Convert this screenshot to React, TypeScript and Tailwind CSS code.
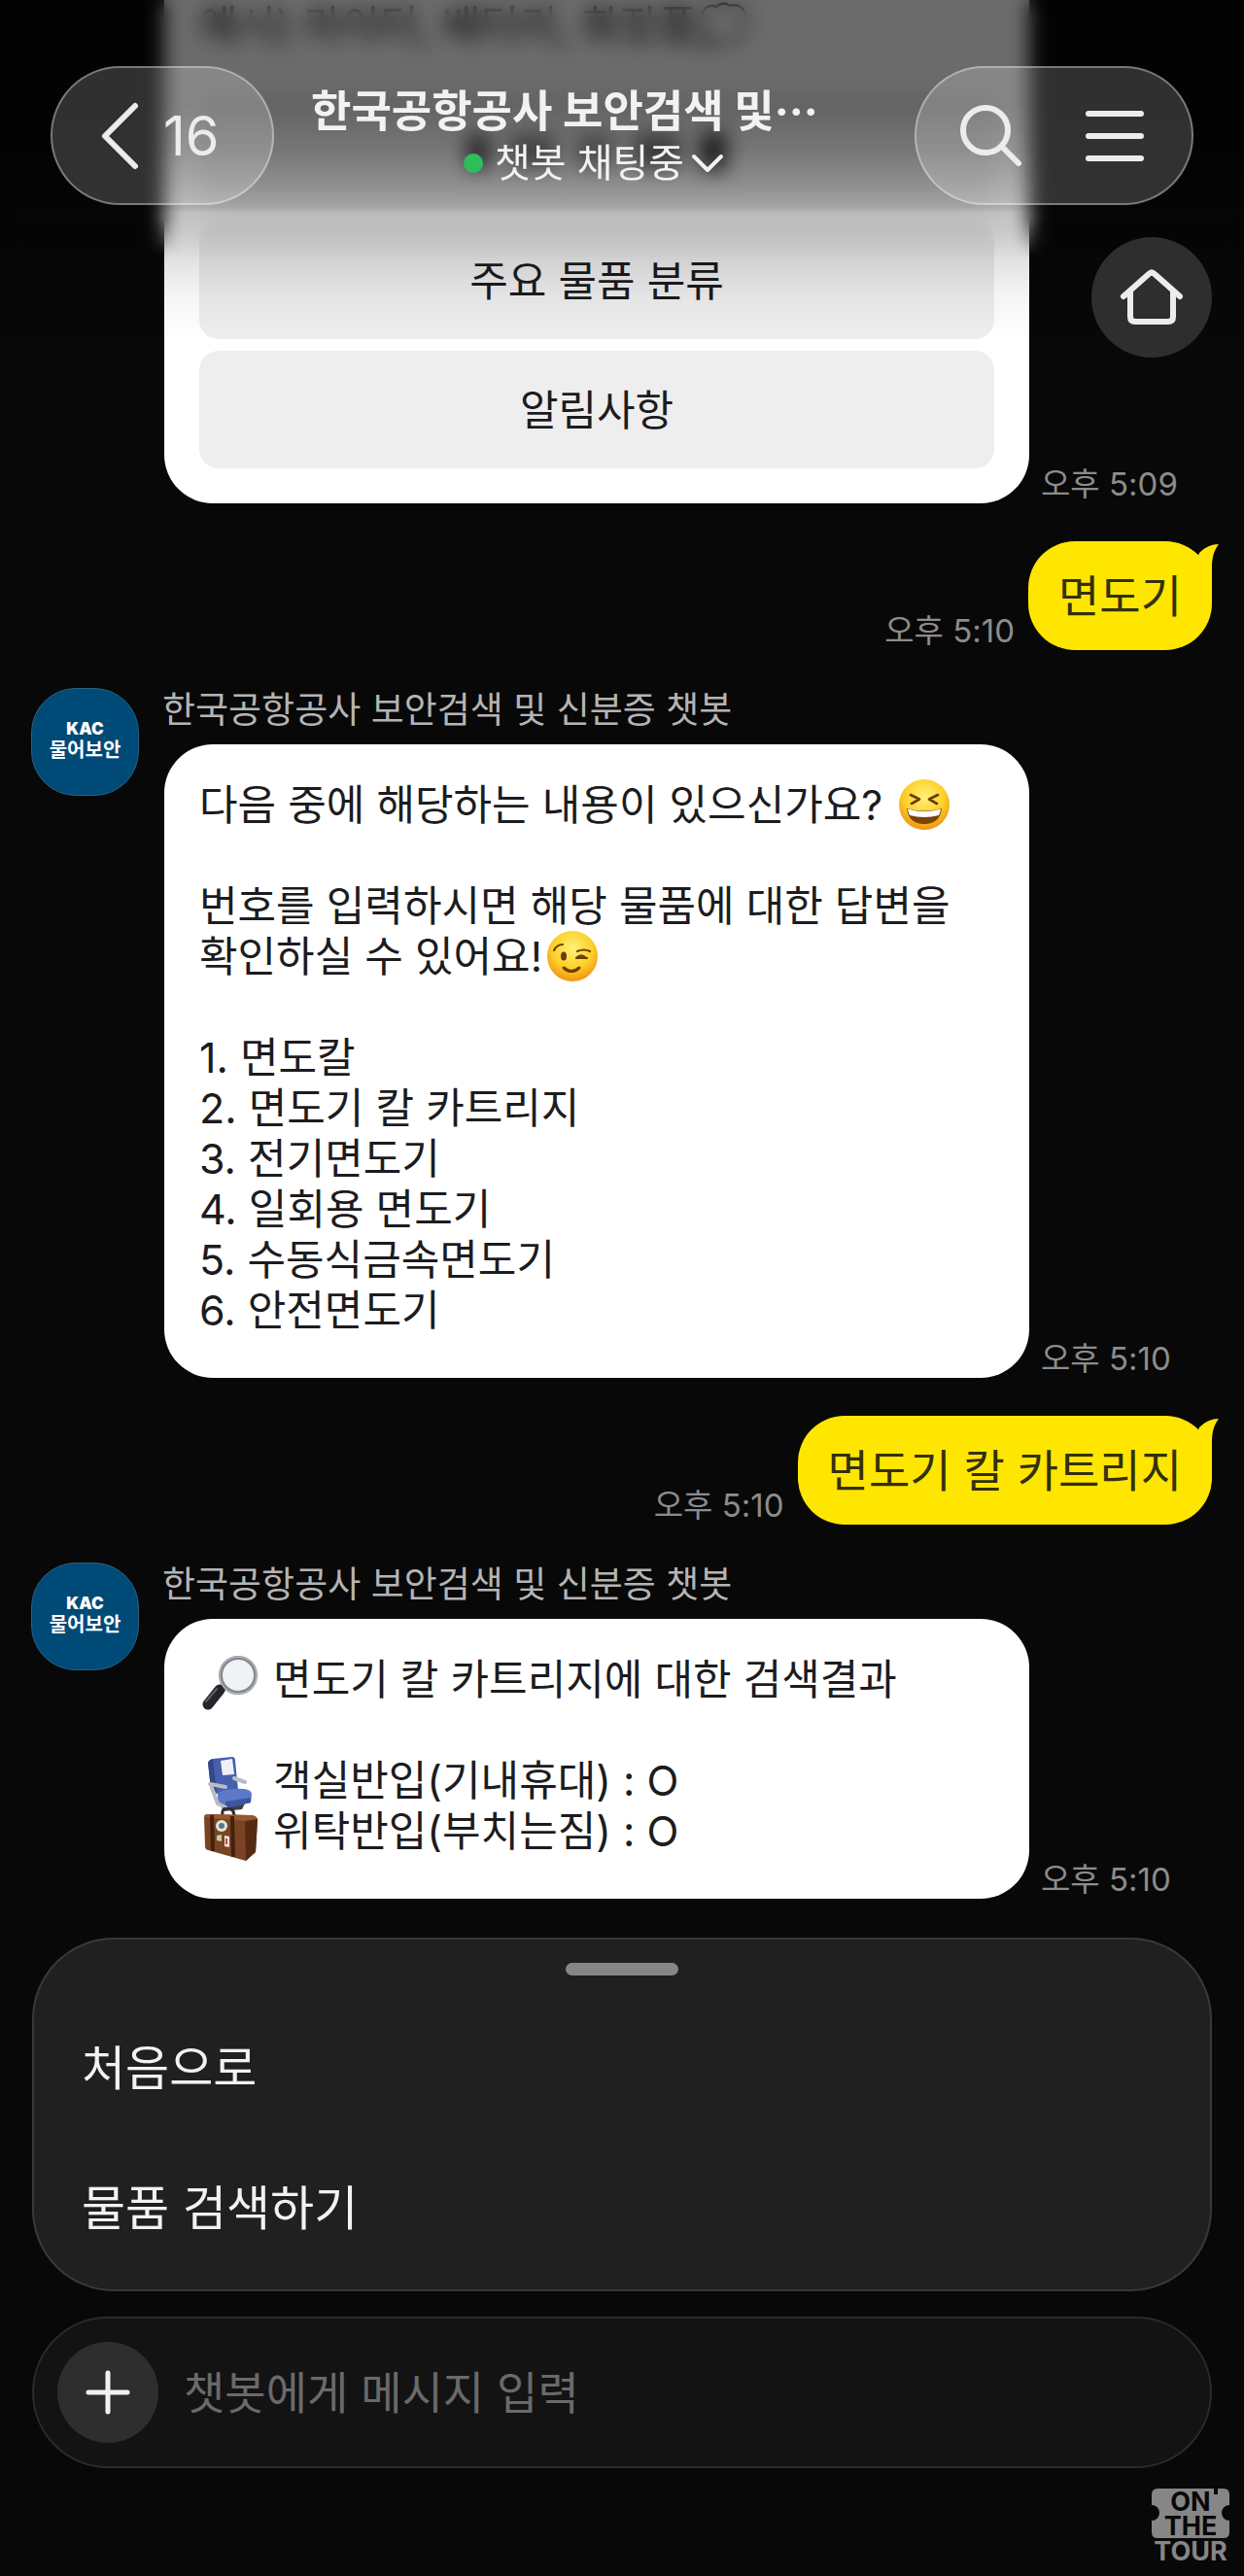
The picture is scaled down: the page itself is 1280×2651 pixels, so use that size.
import React from 'react';

interface BotMessageProps {
  time: string;
  children: React.ReactNode;
}

interface UserMessageProps {
  text: string;
  time: string;
}

const BOT_NAME = '한국공항공사 보안검색 및 신분증 챗봇';
const ITEMS = ['면도칼', '면도기 칼 카트리지', '전기면도기', '일회용 면도기', '수동식금속면도기', '안전면도기'];
const CATEGORY_BUTTONS = ['주요 물품 분류', '알림사항'];
const QUICK_MENU = ['처음으로', '물품 검색하기'];

const LaughEmoji = () => (
  <svg viewBox="0 0 54 54" className="-mt-3 -mb-1 ml-1 inline-block h-[54px] w-[54px] align-middle" role="img" aria-label="웃는 얼굴">
    <defs>
      <radialGradient id="laugh" cx="50%" cy="35%" r="65%">
        <stop offset="0" stopColor="#fff27a" />
        <stop offset="0.6" stopColor="#fdd029" />
        <stop offset="1" stopColor="#ef9511" />
      </radialGradient>
    </defs>
    <circle cx="27" cy="27" r="26" fill="url(#laugh)" />
    <path d="M13 17 L22 21.500 L14 26 M41 17 L32 21.500 L40 26" fill="none" stroke="#6b3d06" strokeWidth="2.600" strokeLinecap="round" strokeLinejoin="round" />
    <path d="M9 31 Q27 36 45 31 Q43 47 27 47 Q11 47 9 31Z" fill="#7c4305" />
    <path d="M10 31.500 Q27 36.500 44 31.500 Q43.500 36 42 38 Q27 42 12 38 Q10.500 36 10 31.500Z" fill="#fff" />
  </svg>
);

const WinkEmoji = () => (
  <svg viewBox="0 0 54 54" className="-mt-3 -mb-1 ml-1 inline-block h-[54px] w-[54px] align-middle" role="img" aria-label="윙크">
    <defs>
      <radialGradient id="wink" cx="50%" cy="35%" r="65%">
        <stop offset="0" stopColor="#fff27a" />
        <stop offset="0.6" stopColor="#fdd029" />
        <stop offset="1" stopColor="#ef9511" />
      </radialGradient>
    </defs>
    <circle cx="27" cy="27" r="26" fill="url(#wink)" />
    <ellipse cx="18" cy="27" rx="3" ry="4.500" fill="#6b3d06" />
    <path d="M8 21 Q11 15 17 15 M32 22 Q39 19 45 22 M31 29 Q36 24 41 29 M32 29 L42 29" fill="none" stroke="#6b3d06" strokeWidth="2.200" strokeLinecap="round" />
    <path d="M18 39 Q26 46 34 39" fill="none" stroke="#6b3d06" strokeWidth="3" strokeLinecap="round" />
  </svg>
);

const MagnifierEmoji = () => (
  <svg viewBox="0 0 62 56" className="-my-2 mr-0.5 inline-block h-[56px] w-[62px] align-middle" role="img" aria-label="돋보기">
    <path d="M26 32 L22 37" stroke="#8b8f95" strokeWidth="6" />
    <path d="M21 35 L9 50" stroke="#24262a" strokeWidth="11" strokeLinecap="round" />
    <path d="M18 34 L7 47" stroke="#5b5f66" strokeWidth="2" strokeLinecap="round" />
    <circle cx="40" cy="20" r="18" fill="#f0f2f5" stroke="#85898f" strokeWidth="4" />
    <circle cx="40" cy="20" r="19" fill="none" stroke="#c9cdd2" strokeWidth="1" />
  </svg>
);

const SeatEmoji = () => (
  <svg viewBox="0 0 62 56" className="-my-2 mr-0.5 inline-block h-[56px] w-[62px] align-middle" role="img" aria-label="좌석">
    <path d="M18 46 L26 56 L44 54 L50 42 Z" fill="#3c4046" />
    <path d="M9 6 Q10 3 14 2 L34 0 Q37 0 37 4 L40 34 L18 38 Q13 38 12 33 Z" fill="#4660ae" />
    <path d="M9 6 Q10 3 14 2 L18 36 Q13 36 12 33 Z" fill="#33478c" />
    <path d="M22 4 L34 2 L36 18 L24 19 Z" fill="#edf0f6" />
    <path d="M19 37 Q30 32 46 33 Q54 34 54 39 L53 47 L27 53 Q20 51 19 44 Z" fill="#5c79c9" />
    <path d="M27 53 L53 47 L53 42 L27 46 Z" fill="#3e559f" />
    <path d="M11 28 L27 31 M13 32 L19 48 L27 52 M36 22 L47 26" fill="none" stroke="#b9bcc2" strokeWidth="4" strokeLinecap="round" />
  </svg>
);

const SuitcaseEmoji = () => (
  <svg viewBox="0 0 62 56" className="-my-2 mr-0.5 inline-block h-[56px] w-[62px] align-middle" role="img" aria-label="여행가방">
    <path d="M24 8 Q23 1 28 1 Q35 0 36 8" fill="none" stroke="#2f2f31" strokeWidth="3" />
    <path d="M5 10 Q5 7 9 7 L54 8 Q60 9 60 13 L58 46 L48 55 L9 44 Q6 43 6 40 Z" fill="#7a4424" />
    <path d="M47 12 L60 12 L58 46 L48 55 Z" fill="#552a13" />
    <path d="M5 10 Q5 7 9 7 L54 8 Q59 9 60 12 L47 14 Z" fill="#96592f" />
    <path d="M13 8 L14 45 M34 9 L35 51" stroke="#43200f" strokeWidth="4" />
    <circle cx="23" cy="19" r="6" fill="#dfe5dc" />
    <circle cx="23" cy="19" r="3" fill="#55788a" />
    <path d="M18 29 L23 28 L23 35 L18 34 Z" fill="#b9d2a2" />
    <path d="M26 29 L31 30 L31 41 L26 40 Z" fill="#f0e3da" />
    <path d="M28 32 L28 38" stroke="#b2513c" strokeWidth="2" />
  </svg>
);

const Avatar = () => (
  <div className="flex h-[111px] w-[111px] shrink-0 flex-col items-center justify-center rounded-[46px] border border-[#2b5f80] bg-[#004a77] pb-1 text-white">
    <span className="text-[17px] leading-[20px] font-black">KAC</span>
    <span className="text-[20px] leading-[24px] font-bold">물어보안</span>
  </div>
);

const Time = ({ value }: { value: string }) => (
  <time className="shrink-0 text-[33px] leading-[40px] whitespace-nowrap text-[#8c8c8c]">{value}</time>
);

const BotMessage: React.FC<BotMessageProps> = ({ time, children }) => (
  <article className="flex pl-8">
    <Avatar />
    <div className="ml-6 min-w-0 flex-1">
      <h2 className="text-[37px] leading-[46px] whitespace-nowrap text-[#b4b4b4]">{BOT_NAME}</h2>
      <div className="mt-3 ml-0.5 flex items-end">
        <div className="min-w-0 flex-1 rounded-[50px] bg-white px-9 pt-9 pb-11 text-[43px] leading-[52px] break-keep text-[#1c1c1e]">
          {children}
        </div>
        <div className="flex w-[221px] shrink-0 pl-3">
          <Time value={time} />
        </div>
      </div>
    </div>
  </article>
);

const UserMessage: React.FC<UserMessageProps> = ({ text, time }) => (
  <article className="flex items-end justify-end gap-3.5 pr-[33px]">
    <Time value={time} />
    <div className="relative rounded-[48px] bg-[#ffe600] px-[31px] py-7 text-[46px] leading-[56px] text-[#33300a]">
      {text}
      {/* tail of the bubble */}
      <svg viewBox="0 0 40 50" className="absolute top-0 -right-[7px] h-[50px] w-[40px]" aria-hidden="true">
        <path d="M20 12 C26 6 33 3 40 3 C35 10 33 16 33 28 L33 50 L10 40 Z" fill="#ffe600" />
      </svg>
    </div>
  </article>
);

const Header = () => (
  <header className="absolute inset-x-0 top-0 z-10">
    {/* strong blur behind the bar, then a softer one that fades out below it */}
    <div className="absolute inset-x-0 top-0 h-[265px] backdrop-blur-[10px] [mask-image:linear-gradient(to_bottom,black_225px,transparent_265px)]" />
    <div className="absolute inset-x-0 top-0 h-[350px] bg-[linear-gradient(to_bottom,rgba(0,0,0,0.58)_0px,rgba(0,0,0,0.58)_110px,rgba(0,0,0,0.5)_155px,rgba(0,0,0,0.4)_190px,rgba(0,0,0,0.32)_213px,rgba(0,0,0,0.24)_219px,rgba(0,0,0,0.2)_240px,rgba(0,0,0,0.11)_270px,rgba(0,0,0,0.04)_305px,rgba(0,0,0,0)_350px)]" />
    <div className="relative flex px-[52px] pt-[68px]">
      <button className="flex h-[143px] w-[230px] shrink-0 items-center rounded-[72px] border-2 border-white/35 bg-white/18 pl-[48px] text-[#ececec]" aria-label="뒤로 16">
        <svg viewBox="0 0 42 72" className="h-[72px] w-[42px]" aria-hidden="true">
          <path d="M37 5 L6 36 L37 67" fill="none" stroke="currentColor" strokeWidth="6" strokeLinecap="round" strokeLinejoin="round" />
        </svg>
        <span className="ml-6 text-[56px] leading-[64px]">16</span>
      </button>
      <div className="min-w-0 flex-1 px-[38px] pt-5 text-[#f2f2f2]">
        <h1 className="truncate text-[45px] leading-[54px] font-bold">한국공항공사 보안검색 및···</h1>
        <button className="mx-auto flex items-center text-[40px] leading-[52px]">
          <span className="mr-3 h-5 w-5 rounded-full bg-[#2fbd5b]" />
          챗봇 채팅중
          <svg viewBox="0 0 36 22" className="ml-1.5 h-[22px] w-[36px]" aria-hidden="true">
            <path d="M4 4 L18 18 L32 4" fill="none" stroke="currentColor" strokeWidth="4" strokeLinecap="round" strokeLinejoin="round" />
          </svg>
        </button>
      </div>
      <div className="flex h-[143px] w-[287px] shrink-0 items-center justify-between rounded-[72px] border-2 border-white/35 bg-white/18 px-[43px] text-[#ececec]">
        <button aria-label="검색">
          <svg viewBox="0 0 68 68" className="h-[68px] w-[68px]" aria-hidden="true">
            <circle cx="28" cy="28" r="23" fill="none" stroke="currentColor" strokeWidth="6" />
            <path d="M45 45 L62 62" stroke="currentColor" strokeWidth="6" strokeLinecap="round" />
          </svg>
        </button>
        <button aria-label="메뉴">
          <svg viewBox="0 0 68 60" className="h-[60px] w-[68px]" aria-hidden="true">
            <path d="M5 7 H59 M5 30 H59 M5 53 H59" stroke="currentColor" strokeWidth="6" strokeLinecap="round" />
          </svg>
        </button>
      </div>
    </div>
    <button className="relative mt-[33px] mr-[33px] ml-auto flex h-[124px] w-[124px] items-center justify-center rounded-full bg-[#2e2e2e] text-[#ececec]" aria-label="홈">
      <svg viewBox="0 0 66 58" className="h-[58px] w-[66px]" aria-hidden="true">
        <path d="M4 28 L30 5 Q33 2 36 5 L62 28" fill="none" stroke="currentColor" strokeWidth="6" strokeLinecap="round" strokeLinejoin="round" />
        <path d="M11 23 V49 Q11 54 16 54 H50 Q55 54 55 49 V23" fill="none" stroke="currentColor" strokeWidth="6" strokeLinecap="round" />
      </svg>
    </button>
  </header>
);

const Watermark = () => (
  <svg viewBox="0 0 80 76" className="absolute right-[15px] bottom-[14px] h-[76px] w-[80px] overflow-visible" role="img" aria-label="ON' THE TOUR">
    <path d="M6 0 H64 V6 H68 V0 H74 Q80 0 80 6 V17 A8 8 0 0 0 80 33 V45 Q80 51 74 51 H6 Q0 51 0 45 V33 A8 8 0 0 0 0 17 V6 Q0 0 6 0Z" fill="#868686" />
    <g fontFamily="Inter, sans-serif" fontWeight="700" fontSize="27" textAnchor="middle">
      <text x="40" y="23" fill="#080808">ON</text>
      <text x="40" y="48" fill="#080808">THE</text>
      <text x="40" y="74" fill="#868686">TOUR</text>
    </g>
  </svg>
);

export default function App() {
  return (
    <div className="relative flex min-h-screen flex-col overflow-hidden bg-[#080808] font-[Inter,'Noto_Sans_CJK_KR',sans-serif]">
      <Header />

      <main className="flex flex-1 flex-col gap-[39px]">
        <article className="flex items-end pl-[169px]">
          <div className="min-w-0 flex-1 rounded-b-[50px] bg-white px-9 pb-9 text-[43px] leading-[52px] text-[#1c1c1e]">
            <p>예시) 라이터, 배터리, 화장품💭</p>
            {/* this one sits fully under the header blur */}
            <div className="mt-[43px] flex h-[121px] items-center justify-center gap-5 rounded-[20px] bg-[#eeeeee]" aria-hidden="true">
              <span className="h-9 w-6 bg-[#555555]" />
              <span className="h-9 w-12 bg-[#8a8a8a]" />
              <span className="h-9 w-10 bg-[#999999]" />
              <span className="h-9 w-12 bg-[#777777]" />
              <span className="h-10 w-7 bg-[#444444]" />
            </div>
            <div className="mt-3 flex flex-col gap-3">
              {CATEGORY_BUTTONS.map((label) => (
                <button key={label} className="h-[121px] rounded-[20px] bg-[#eeeeee]">
                  {label}
                </button>
              ))}
            </div>
          </div>
          <div className="flex w-[221px] shrink-0 pl-3">
            <Time value="오후 5:09" />
          </div>
        </article>

        <UserMessage text="면도기" time="오후 5:10" />

        <BotMessage time="오후 5:10">
          <p>
            다음 중에 해당하는 내용이 있으신가요? <LaughEmoji />
          </p>
          <p className="mt-[52px]">
            번호를 입력하시면 해당 물품에 대한 답변을 확인하실 수 있어요!
            <WinkEmoji />
          </p>
          <ol className="mt-[52px]">
            {ITEMS.map((item, i) => (
              <li key={item}>
                {i + 1}. {item}
              </li>
            ))}
          </ol>
        </BotMessage>

        <UserMessage text="면도기 칼 카트리지" time="오후 5:10" />

        <BotMessage time="오후 5:10">
          <p>
            <MagnifierEmoji /> 면도기 칼 카트리지에 대한 검색결과
          </p>
          <p className="mt-[52px]">
            <SeatEmoji /> 객실반입(기내휴대) : O
          </p>
          <p>
            <SuitcaseEmoji /> 위탁반입(부치는짐) : O
          </p>
        </BotMessage>
      </main>

      <footer className="px-[33px] pt-[39px] pb-[111px]">
        <nav className="rounded-[84px] border-2 border-[#393939] bg-[#202020] pt-6 pb-[11px]">
          <div className="mx-auto h-[13px] w-[116px] rounded-full bg-[#868686]" />
          <ul className="mt-6">
            {QUICK_MENU.map((label) => (
              <li key={label}>
                <button className="h-36 w-full px-[49px] text-left text-[49px] text-[#f2f2f2]">{label}</button>
              </li>
            ))}
          </ul>
        </nav>

        <form className="mt-[26px] flex h-[156px] items-center rounded-[78px] border-2 border-[#2b2b2b] bg-[#131313] pl-6" onSubmit={(e) => e.preventDefault()}>
          <button type="button" className="flex h-[104px] w-[104px] shrink-0 items-center justify-center rounded-full bg-[#2e2e2e] text-[#f2f2f2]" aria-label="추가">
            <svg viewBox="0 0 46 46" className="h-[46px] w-[46px]" aria-hidden="true">
              <path d="M3 23 H43 M23 3 V43" stroke="currentColor" strokeWidth="5" strokeLinecap="round" />
            </svg>
          </button>
          <input
            type="text"
            aria-label="메시지"
            placeholder="챗봇에게 메시지 입력"
            className="mr-12 ml-[26px] h-full min-w-0 flex-1 bg-transparent text-[46px] text-white outline-none placeholder:text-[#6a6a6a]"
          />
        </form>
      </footer>

      <Watermark />
    </div>
  );
}
